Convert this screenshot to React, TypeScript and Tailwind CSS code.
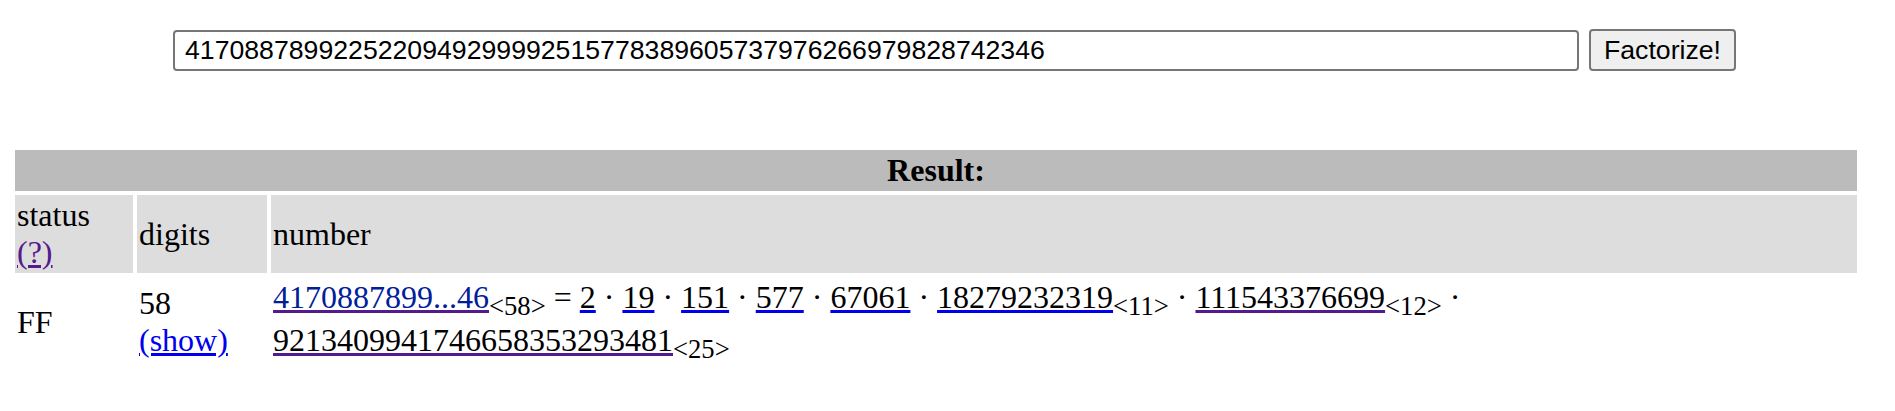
import React from "react";

const Dot = () => <>{" \u00b7 "}</>;

function Sub({ children }: { children: React.ReactNode }) {
  return <sub className="static align-sub text-[26.67px] leading-[normal]">{children}</sub>;
}

function BlueFactor({ v }: { v: string }) {
  return (
    <a href="#" className="text-[#0000EE] underline decoration-[3px]">
      <span className="text-black">{v}</span>
    </a>
  );
}

function PurpleFactor({ v }: { v: string }) {
  return (
    <a href="#" className="text-[#551A8B] underline decoration-[3px]">
      <span className="text-black">{v}</span>
    </a>
  );
}

export default function App() {
  return (
    <div className="w-[1895px] h-[411px] bg-white text-black font-['Liberation_Serif',serif] text-[32px] leading-[normal]">
      <div className="flex items-center gap-[10px] pl-[173px] pt-[29px]">
        <input
          readOnly
          value="4170887899225220949299992515778389605737976266979828742346"
          className="w-[1406px] h-[41px] border-2 border-[#767676] rounded-[4px] px-[10px] py-0 bg-white text-black font-['Liberation_Sans',Arial,sans-serif] text-[26.67px] leading-[normal] outline-none"
        />
        <button className="h-[42px] border-2 border-[#767676] rounded-[4px] bg-[#efefef] px-[13px] py-0 text-black font-['Liberation_Sans',Arial,sans-serif] text-[26.67px] leading-[normal]">
          Factorize!
        </button>
      </div>

      <table className="ml-[11px] mt-[75px] w-[1850px] border-separate border-spacing-[4px]">
        <colgroup>
          <col className="w-[118px]" />
          <col className="w-[130px]" />
          <col />
        </colgroup>
        <tbody>
          <tr>
            <td colSpan={3} className="bg-[#bbbbbb] p-[2px] text-center font-bold align-middle">
              Result:
            </td>
          </tr>
          <tr>
            <td className="bg-[#dddddd] p-[2px] align-middle">
              status
              <br />
              <a href="#" className="text-[#551A8B] underline decoration-[3px]">
                (?)
              </a>
            </td>
            <td className="bg-[#dddddd] p-[2px] align-middle">digits</td>
            <td className="bg-[#dddddd] p-[2px] align-middle">number</td>
          </tr>
          <tr>
            <td className="p-[2px] align-middle">FF</td>
            <td className="p-[2px] align-middle">
              58
              <br />
              <a href="#" className="text-[#0000EE] underline decoration-[3px]">
                (show)
              </a>
            </td>
            <td className="p-[2px] align-middle">
              <a href="#" className="text-[#551A8B] underline decoration-[3px]">
                <span className="text-[#002099]">4170887899...46</span>
              </a>
              <Sub>&lt;58&gt;</Sub>
              {" = "}
              <BlueFactor v="2" />
              <Dot />
              <BlueFactor v="19" />
              <Dot />
              <BlueFactor v="151" />
              <Dot />
              <BlueFactor v="577" />
              <Dot />
              <BlueFactor v="67061" />
              <Dot />
              <BlueFactor v="18279232319" />
              <Sub>&lt;11&gt;</Sub>
              <Dot />
              <PurpleFactor v="111543376699" />
              <Sub>&lt;12&gt;</Sub>
              <Dot />
              <PurpleFactor v="9213409941746658353293481" />
              <Sub>&lt;25&gt;</Sub>
            </td>
          </tr>
        </tbody>
      </table>
    </div>
  );
}
